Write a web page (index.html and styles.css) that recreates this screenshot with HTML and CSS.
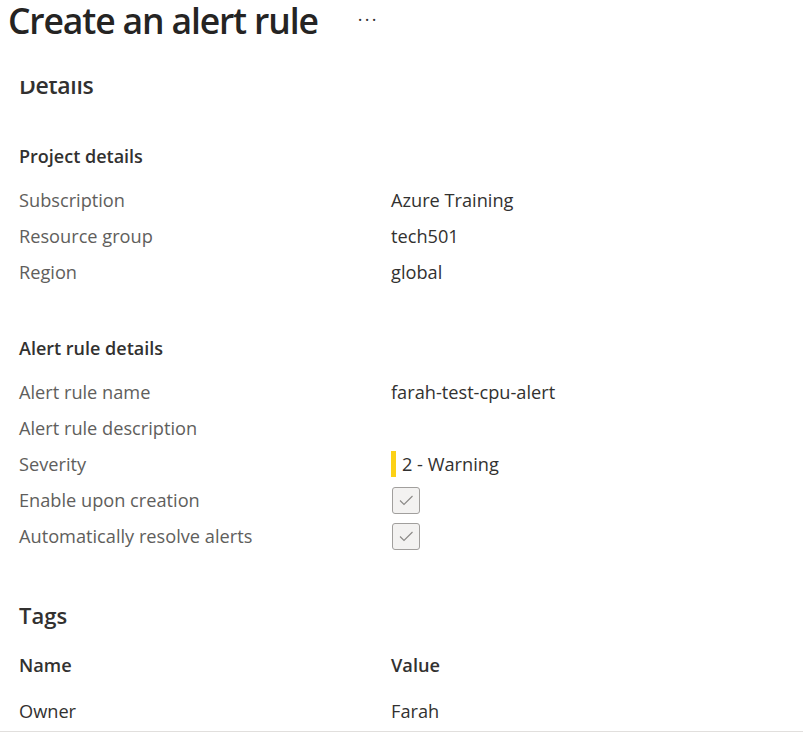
FILE: index.html
```html
<!DOCTYPE html>
<html>
<head>
<meta charset="utf-8">
<link rel="stylesheet" href="styles.css">
</head>
<body>
<div class="page">
  <header class="header">
    <h1 class="title">Create an alert rule</h1>
    <span class="more">···</span>
  </header>
  <div class="viewport">
    <div class="content">
      <h2 class="section-title details-title">Details</h2>

      <h3 class="group-title">Project details</h3>
      <div class="row"><span class="label">Subscription</span><span class="value">Azure Training</span></div>
      <div class="row"><span class="label">Resource group</span><span class="value">tech501</span></div>
      <div class="row"><span class="label">Region</span><span class="value">global</span></div>

      <h3 class="group-title group-gap">Alert rule details</h3>
      <div class="row"><span class="label">Alert rule name</span><span class="value">farah-test-cpu-alert</span></div>
      <div class="row"><span class="label">Alert rule description</span><span class="value"></span></div>
      <div class="row"><span class="label">Severity</span><span class="value severity"><span class="sev-bar"></span>2 - Warning</span></div>
      <div class="row"><span class="label">Enable upon creation</span><span class="value"><span class="check"><svg viewBox="0 0 26 26" width="26" height="26"><path d="M7 13.5 L11 17.5 L19.5 9" fill="none" stroke="#8a8886" stroke-width="1.1"/></svg></span></span></div>
      <div class="row"><span class="label">Automatically resolve alerts</span><span class="value"><span class="check"><svg viewBox="0 0 26 26" width="26" height="26"><path d="M7 13.5 L11 17.5 L19.5 9" fill="none" stroke="#8a8886" stroke-width="1.1"/></svg></span></span></div>

      <h2 class="section-title tags-title">Tags</h2>
      <div class="row head-row"><span class="col-head">Name</span><span class="col-head value">Value</span></div>
      <div class="row tag-row"><span class="tag-cell">Owner</span><span class="tag-cell value">Farah</span></div>
    </div>
  </div>
</div>
</body>
</html>
```

FILE: styles.css
```css
* { box-sizing: border-box; }
html, body { margin: 0; padding: 0; background: #ffffff; }
body {
  font-family: "Open Sans", "Noto Sans", "Liberation Sans", sans-serif;
  color: #323130;
  width: 803px;
  height: 755px;
  overflow: hidden;
}
.page { width: 803px; }
.header {
  height: 81px;
  display: flex;
  align-items: flex-start;
  padding-left: 8px;
}
.title {
  margin: 0;
  font-size: 35.5px;
  font-weight: 600;
  line-height: 41px;
  color: #252423;
  letter-spacing: -1.15px;
}
.more {
  margin-left: 40px;
  margin-top: 9px;
  font-size: 18px;
  line-height: 20px;
  color: #323130;
  letter-spacing: 2.3px;
}
.viewport {
  height: 651px;
  overflow: hidden;
  border-bottom: 1px solid #e1dfdd;
}
.content {
  margin-top: -11px;
  padding-left: 19px;
}
.section-title {
  margin: 0;
  font-size: 22px;
  font-weight: 600;
  line-height: 30px;
  color: #323130;
}
.details-title {
  font-size: 23px;
  letter-spacing: -0.3px;
}
.group-title {
  margin: 43px 0 13px;
  font-size: 18px;
  font-weight: 600;
  line-height: 26px;
  color: #323130;
}
.group-gap { margin-top: 45px; }
.row {
  display: flex;
  align-items: center;
  height: 36px;
  font-size: 18.2px;
}
.label {
  width: 372px;
  color: #605e5c;
}
.value {
  color: #323130;
  display: flex;
  align-items: center;
}
.severity { gap: 6px; }
.sev-bar {
  display: inline-block;
  width: 5px;
  height: 26px;
  background: #fcd116;
}
.check {
  display: flex;
  width: 28px;
  height: 27px;
  border: 1px solid #a19f9d;
  border-radius: 3px;
  background: #f3f2f1;
  align-items: center;
  justify-content: center;
  margin-left: 1px;
}
.tags-title { margin-top: 46px; }
.head-row { margin-top: 16px; height: 38px; }
.col-head { font-weight: 600; width: 372px; }
.col-head.value { width: auto; }
.tag-row { margin-top: 9px; }
.tag-cell { width: 372px; color: #323130; }
.tag-cell.value { width: auto; }
```
